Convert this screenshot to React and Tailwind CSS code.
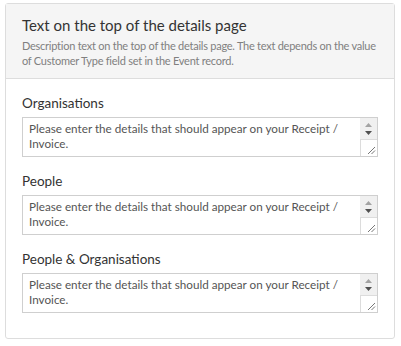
const fields = ["Organisations", "People", "People & Organisations"];

function NoteBox() {
  return (
    <div className="flex h-[40px] w-full border border-[#cfcfcf] bg-white">
      <textarea
        readOnly
        rows={2}
        value="Please enter the details that should appear on your Receipt / Invoice."
        className="flex-1 resize-none overflow-hidden bg-transparent px-[6px] py-[3px] text-[11.7px] leading-[15px] text-[#555] outline-none"
      />
      <div className="flex w-[17px] flex-col">
        <div className="flex flex-1 flex-col items-center justify-center gap-[4px] bg-[#f0f0f0]">
          <svg width="7" height="4" viewBox="0 0 7 4">
            <path d="M0 4 L3.5 0 L7 4 Z" fill="#a3a3a3" />
          </svg>
          <svg width="7" height="4" viewBox="0 0 7 4">
            <path d="M0 0 L3.5 4 L7 0 Z" fill="#505050" />
          </svg>
        </div>
        <div className="relative h-[17px] border-l border-t border-[#dcdcdc] bg-white">
          <svg className="absolute right-[1px] bottom-[1px]" width="10" height="10" viewBox="0 0 10 10">
            <path d="M9 2 L2 9 M9 5.5 L5.5 9" stroke="#777" strokeWidth="1" />
          </svg>
        </div>
      </div>
    </div>
  );
}

export default function App() {
  return (
    <div className="px-[5px] pt-[3px]" style={{ fontFamily: 'Lato, "Open Sans", sans-serif' }}>
      <div className="w-[390px] rounded-[3px] border border-[#dddddd] bg-white">
        {/* Header */}
        <div className="border-b border-[#dddddd] bg-[#f5f5f5] px-[16px] pt-[11px] pb-[10px]">
          <div className="text-[15px] leading-[20px] text-[#333]">Text on the top of the details page</div>
          <div className="mt-[3px] text-[11px] leading-[15px] tracking-[-0.25px] text-[#808080]">
            Description text on the top of the details page. The text depends on the value of Customer Type field set
            in the Event record.
          </div>
        </div>

        {/* Fields */}
        <div className="flex flex-col gap-[14px] px-[16px] pt-[14px] pb-[25px]">
          {fields.map((f) => (
            <div key={f} className="flex flex-col gap-[4px]">
              <label className="text-[13.5px] leading-[20px] text-[#333]">{f}</label>
              <NoteBox />
            </div>
          ))}
        </div>
      </div>
    </div>
  );
}
